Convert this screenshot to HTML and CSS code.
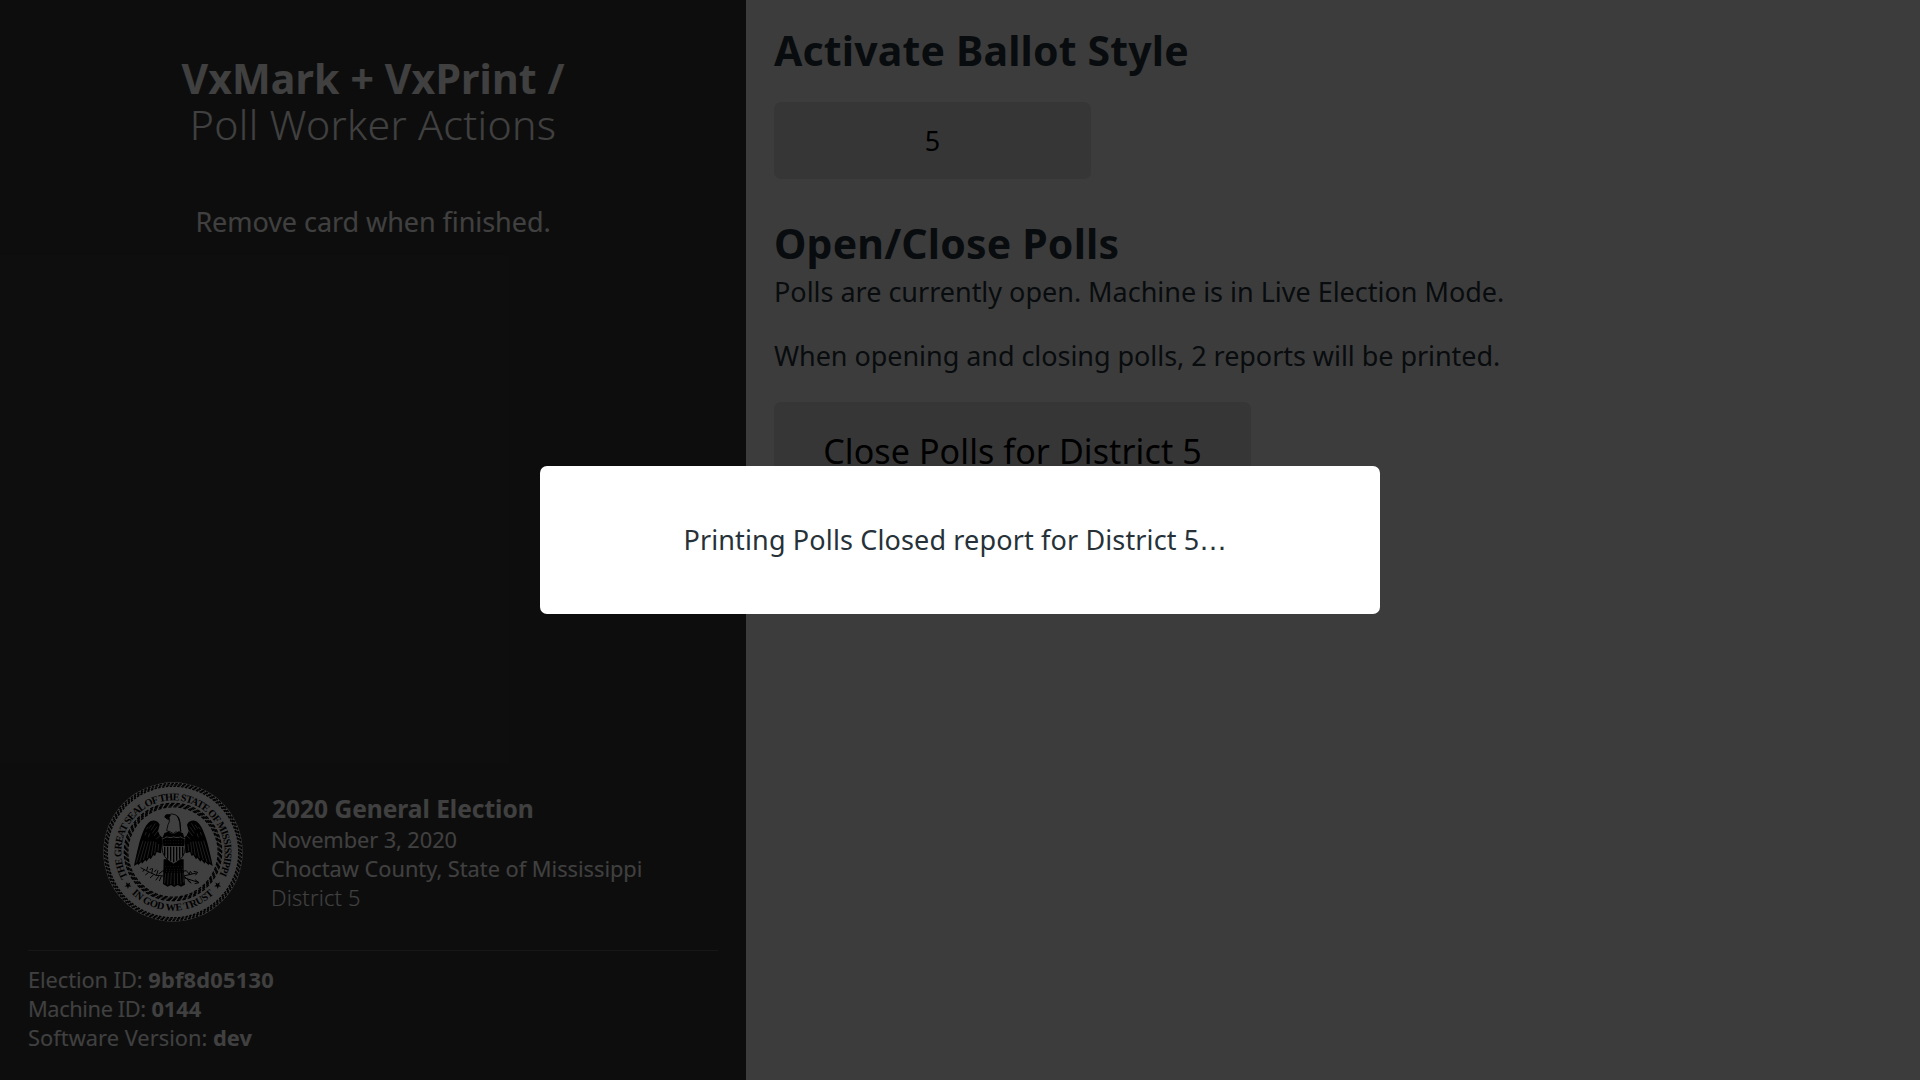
FILE: index.html
```html
<!DOCTYPE html>
<html lang="en">
<head>
<meta charset="utf-8">
<title>VxMark</title>
<link rel="stylesheet" href="styles.css">
</head>
<body>
<div class="screen">
  <aside class="sidebar">
    <header class="title">
      <h1 class="title-app">VxMark + VxPrint /</h1>
      <div class="title-page">Poll Worker Actions</div>
    </header>
    <p class="hint">Remove card when finished.</p>
    <section class="election">
      <svg class="seal" viewBox="38 36 420 420" role="img" aria-label="State seal">
        <defs>
          <path id="arc-top" d="M112.4 321.1A155 155 0 1 1 383.6 321.1"/>
          <path id="arc-bottom" d="M123.6 370.4A176 176 0 0 0 372.4 370.4"/>
          <path id="star" d="M0-11L2.8-3.6 10.5-3.4 4.4 1.4 6.5 8.9 0 4.5-6.5 8.9-4.4 1.4-10.5-3.4-2.8-3.6Z"/>
          <g id="wing">
            <path d="M208 164C203 153 190 149 180 154C165 162 153 196 146 222C140 247 134 270 131 288L142 281L143 286L153 276L155 281L165 270L168 275L177 263L181 268L189 255L194 258L199 246L212 250L217 205Q207 197 203 183Z"/>
            <path class="feather" d="M158 212L138 278M166 214L148 276M174 214L159 270M182 214L171 264M190 214L183 257M197 216L193 250M205 222L203 243M174 170L168 178M184 164L176 176M195 160L182 181M200 170L186 190M203 182L191 198M210 196L198 207M168 186L164 196M178 190L174 202"/>
          </g>
        </defs>
        <circle class="disc" cx="248" cy="246" r="209"/>
        <g class="rope rope-outer">
          <circle cx="248" cy="246" r="197.5" pathLength="1080"/>
          <circle cx="248" cy="246" r="201.5" pathLength="1080" stroke-dashoffset="-2.5"/>
          <circle cx="248" cy="246" r="205.5" pathLength="1080" stroke-dashoffset="-5"/>
        </g>
        <g class="rope rope-inner">
          <circle cx="248" cy="246" r="135.5" pathLength="560"/>
          <circle cx="248" cy="246" r="139" pathLength="560" stroke-dashoffset="-2"/>
          <circle cx="248" cy="246" r="142.5" pathLength="560" stroke-dashoffset="-4"/>
          <circle cx="248" cy="246" r="146" pathLength="560" stroke-dashoffset="-6"/>
        </g>
        <text class="motto"><textPath href="#arc-top" textLength="636">THE GREAT SEAL OF THE STATE OF MISSISSIPPI</textPath></text>
        <text class="motto"><textPath href="#arc-bottom" textLength="274">IN GOD WE TRUST</textPath></text>
        <use href="#star" transform="translate(113 346) rotate(-35)"/>
        <use href="#star" transform="translate(382 346) rotate(35)"/>
        <use href="#wing"/>
        <use href="#wing" transform="matrix(-1 0 0 1 498 0)"/>
        <path d="M220 268L280 268L280 298L284 344L272 350L262 345L252 351L242 345L232 350L218 342Z"/>
        <path class="feather" d="M226 310L223 340M234 308L232 344M243 308L241 342M252 308L252 346M261 308L262 342M270 308L272 344M278 308L279 338"/>
        <path class="speckle" d="M224 290H278M228 298H278M228 304H278"/>
        <path class="outline" d="M229 182L233 164Q238 157 237 149Q229 149 224 141Q226 133 235 134Q244 129 257 135Q266 141 269 158L271 182L264 190L257 185L249 191L241 186Z"/>
        <path d="M222 142Q224 131 234 133L242 136L237 143L240 149L231 146Z"/>
        <path d="M259 136Q268 141 270 158L273 186L269 184L267 156Z"/>
        <path d="M222 190L235 184L241 189L249 192L258 188L265 184L278 190L282 205H216Z"/>
        <path class="shield" d="M214 204Q224 203 229 198Q240 202 250 198Q261 202 271 198Q276 203 286 204Q281 217 285 232Q285 264 250 282Q215 264 215 232Q219 217 214 204Z"/>
        <path d="M217 207Q224 206 230 202Q240 206 250 202Q261 206 270 202Q276 206 283 207L281 228H219Z"/>
        <path class="stripes" d="M223 230V257M232 230V266M241 230V272M250 230V277M259 230V272M268 230V266M277 230V257"/>
        <path class="speckle" d="M224 212H278M224 221H278"/>
        <path class="branch" d="M219 318Q195 319 180 308Q167 302 151 293M163 298L157 305M169 302L172 290M175 307L165 315M184 311L187 295M190 314L179 324M198 317L203 301M205 319L196 331M213 319L207 333M178 300L184 294M192 306L198 299M280 318L318 309M280 323L324 337M282 319L301 337M310 304L322 307L315 316M314 329L326 338L313 341M292 331L303 340M296 314L300 304L306 312M205 312L218 302L225 307M276 304L288 302L299 315"/>
      </svg>
      <div class="election-info">
        <h2 class="election-name">2020 General Election</h2>
        <div class="election-date">November 3, 2020</div>
        <div class="election-place">Choctaw County, State of Mississippi</div>
        <div class="election-district">District 5</div>
      </div>
    </section>
    <footer class="machine">
      <div><span class="election-label">Election ID:</span> <b class="election-id">9bf8d05130</b></div>
      <div><span class="machine-label">Machine ID:</span> <b>0144</b></div>
      <div><span class="version-label">Software Version:</span> <b>dev</b></div>
    </footer>
  </aside>
  <main class="content">
    <h2 class="heading">Activate Ballot Style</h2>
    <button class="button ballot-style" type="button">5</button>
    <h2 class="heading">Open/Close Polls</h2>
    <p class="polls-status">Polls are currently open. Machine is in Live Election Mode.</p>
    <p class="polls-note">When opening and closing polls, 2 reports will be printed.</p>
    <button class="button close-polls" type="button">Close Polls for District 5</button>
  </main>
</div>
<div class="overlay">
  <div class="modal" role="dialog">Printing Polls Closed report for District 5<span class="ellipsis">…</span></div>
</div>
</body>
</html>
```
FILE: styles.css
```css
* {
  box-sizing: border-box;
}

body {
  margin: 0;
  font-family: "Noto Sans", sans-serif;
  font-size: 27px;
  line-height: 37px;
  color: #263238;
}

h1, h2, p {
  margin: 0;
}

.screen {
  display: flex;
  height: 1080px;
  overflow: hidden;
}

/* Sidebar */
.sidebar {
  display: flex;
  flex-direction: column;
  flex: none;
  width: 746px;
  padding: 55px 28px 28px;
  background: #363636;
  color: #fff;
}

.title {
  font-size: 41px;
  line-height: 46px;
  text-align: center;
}

.title-app {
  font-size: inherit;
  font-weight: 700;
  letter-spacing: 0.142px;
}

.title-page {
  font-weight: 300;
  letter-spacing: 0.345px;
}

.hint {
  margin-top: 56px;
  letter-spacing: -0.06px;
  text-align: center;
}

.election {
  display: flex;
  align-items: center;
  gap: 28px;
  margin-top: auto;
  padding: 0 0 28px 75px;
}

.election-info {
  padding-top: 2px;
  font-size: 21.8px;
  line-height: 29px;
  white-space: nowrap;
}

.election-name {
  margin-bottom: 2px;
  padding-left: 1px;
  font-size: 24.5px;
  line-height: 29px;
}

.election-date {
  letter-spacing: -0.087px;
}

.election-place {
  letter-spacing: -0.03px;
}

.election-district {
  font-weight: 300;
  letter-spacing: 0.186px;
}

.machine {
  border-top: 1px solid rgba(255, 255, 255, 0.2);
  padding-top: 14px;
  font-size: 21.8px;
  line-height: 29px;
}

.election-label {
  letter-spacing: -0.08px;
}

.election-id {
  letter-spacing: 0.245px;
}

.machine-label {
  letter-spacing: -0.4px;
}

.version-label {
  letter-spacing: 0.03px;
}

/* State seal */
.seal {
  flex: none;
  width: 140px;
  height: 140px;
}

.disc {
  fill: #fff;
}

.rope {
  fill: none;
  stroke: #000;
}

.rope-outer {
  stroke-width: 4.4;
  stroke-dasharray: 6.5 3.5;
}

.rope-inner {
  stroke-width: 3.9;
  stroke-dasharray: 6.5 3.5;
}

.motto {
  font: 700 31px "Liberation Serif", serif;
}

.feather {
  fill: none;
  stroke: #ccc;
  stroke-width: 1.8;
}

.speckle {
  fill: none;
  stroke: #bbb;
  stroke-width: 2;
  stroke-dasharray: 2 6;
}

.outline {
  fill: #fff;
  stroke: #000;
  stroke-width: 2.5;
}

.shield {
  fill: #fff;
  stroke: #000;
  stroke-width: 2.5;
}

.stripes {
  stroke: #000;
  stroke-width: 4;
}

.branch {
  fill: none;
  stroke: #000;
  stroke-width: 3;
}

/* Content */
.content {
  flex: 1;
  padding: 27px 28px;
  background: #eee;
}

.heading {
  font-size: 41px;
  line-height: 46px;
  letter-spacing: 0.17px;
}

.button {
  display: block;
  border: 0;
  border-radius: 7px;
  background: #d5d5d5;
  color: #000;
  font-family: inherit;
}

.ballot-style {
  width: 317px;
  height: 77px;
  margin: 29px 0 41px;
  font-size: 27px;
}

.polls-status {
  margin-top: 7px;
  letter-spacing: -0.015px;
}

.polls-note {
  margin: 27px 0 28px;
  letter-spacing: -0.051px;
}

.close-polls {
  width: 477px;
  height: 98px;
  font-size: 34px;
  letter-spacing: 0.1px;
}

/* Modal */
.overlay {
  position: absolute;
  inset: 0;
  display: flex;
  align-items: center;
  justify-content: center;
  background: rgba(0, 0, 0, 0.75);
}

.modal {
  width: 840px;
  height: 148px;
  padding: 55px 10px 0 0;
  border-radius: 7px;
  background: #fff;
  letter-spacing: 0.14px;
  text-align: center;
}

.ellipsis {
  font-family: "DejaVu Sans", sans-serif;
  line-height: 1;
}
```
